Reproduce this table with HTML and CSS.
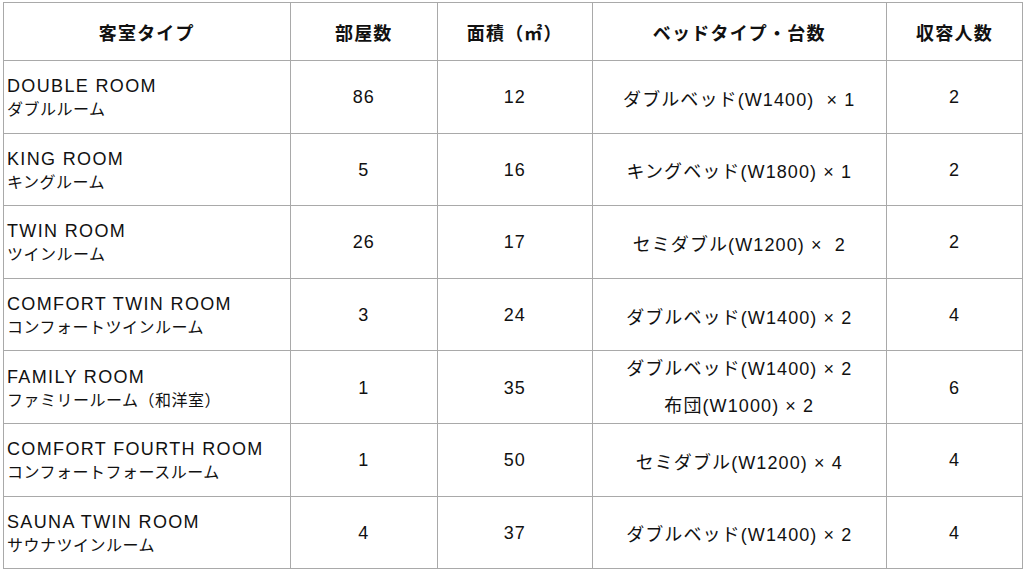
FILE: index.html
```html
<!DOCTYPE html>
<html lang="ja">
<head>
<meta charset="utf-8">
<link rel="stylesheet" href="styles.css">
</head>
<body>
<div class="wrap">
<table class="rooms">
  <colgroup>
    <col class="c-type">
    <col class="c-count">
    <col class="c-area">
    <col class="c-bed">
    <col class="c-cap">
  </colgroup>
  <thead>
    <tr>
      <th>客室タイプ</th>
      <th>部屋数</th>
      <th>面積（㎡）</th>
      <th>ベッドタイプ・台数</th>
      <th>収容人数</th>
    </tr>
  </thead>
  <tbody>
    <tr>
      <td class="name"><span class="en">DOUBLE ROOM</span><span class="ja">ダブルルーム</span></td>
      <td>86</td>
      <td>12</td>
      <td>ダブルベッド(W1400)&nbsp; × 1</td>
      <td>2</td>
    </tr>
    <tr>
      <td class="name"><span class="en">KING ROOM</span><span class="ja">キングルーム</span></td>
      <td>5</td>
      <td>16</td>
      <td>キングベッド(W1800) × 1</td>
      <td>2</td>
    </tr>
    <tr>
      <td class="name"><span class="en">TWIN ROOM</span><span class="ja">ツインルーム</span></td>
      <td>26</td>
      <td>17</td>
      <td>セミダブル(W1200) ×&nbsp; 2</td>
      <td>2</td>
    </tr>
    <tr>
      <td class="name"><span class="en">COMFORT TWIN ROOM</span><span class="ja">コンフォートツインルーム</span></td>
      <td>3</td>
      <td>24</td>
      <td>ダブルベッド(W1400) × 2</td>
      <td>4</td>
    </tr>
    <tr>
      <td class="name"><span class="en">FAMILY ROOM</span><span class="ja">ファミリールーム（和洋室）</span></td>
      <td>1</td>
      <td>35</td>
      <td class="multi"><div class="lines"><span class="line">ダブルベッド(W1400) × 2</span><span class="line">布団(W1000) × 2</span></div></td>
      <td>6</td>
    </tr>
    <tr>
      <td class="name"><span class="en">COMFORT FOURTH ROOM</span><span class="ja">コンフォートフォースルーム</span></td>
      <td>1</td>
      <td>50</td>
      <td>セミダブル(W1200) × 4</td>
      <td>4</td>
    </tr>
    <tr>
      <td class="name"><span class="en">SAUNA TWIN ROOM</span><span class="ja">サウナツインルーム</span></td>
      <td>4</td>
      <td>37</td>
      <td>ダブルベッド(W1400) × 2</td>
      <td>4</td>
    </tr>
  </tbody>
</table>
</div>
</body>
</html>
```

FILE: styles.css
```css
html, body {
  margin: 0;
  padding: 0;
  background: #ffffff;
}

body {
  font-family: "Liberation Sans", "Noto Sans CJK JP", sans-serif;
  color: #111111;
}

.wrap {
  padding: 2px 0 0 3px;
}

.rooms {
  width: 1019px;
  border-collapse: collapse;
  table-layout: fixed;
}

.c-type { width: 286.5px; }
.c-count { width: 147.5px; }
.c-area { width: 154.5px; }
.c-bed { width: 294.5px; }
.c-cap { width: 136px; }

.rooms th,
.rooms td {
  border: 1px solid #a9a9a9;
  padding: 0;
  text-align: center;
  vertical-align: middle;
}

.rooms thead tr {
  height: 58px;
}

.rooms th {
  font-size: 18px;
  font-weight: bold;
  letter-spacing: 1.2px;
  padding-top: 1px;
}

.rooms tbody tr {
  height: 72.6px;
}

.rooms td {
  font-size: 18px;
  letter-spacing: 1.1px;
  padding-top: 2px;
}

.rooms td.name {
  text-align: left;
  padding-left: 3px;
  padding-top: 3px;
  letter-spacing: 0;
}

.en {
  display: block;
  font-size: 18px;
  line-height: 24px;
  letter-spacing: 1.35px;
}

.ja {
  display: block;
  font-size: 16px;
  line-height: 24px;
  letter-spacing: 0.5px;
}

.rooms td.multi {
  padding-top: 0;
}

.lines {
  display: flex;
  flex-direction: column;
  align-items: center;
  gap: 13px;
}

.line {
  line-height: 24px;
}
```
